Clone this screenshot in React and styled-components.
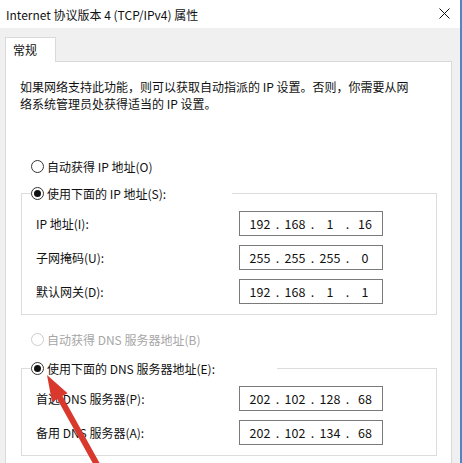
import React from "react"
import styled, { createGlobalStyle } from "styled-components"

const GlobalStyle = createGlobalStyle`
  html, body {
    margin: 0;
    padding: 0;
    background: #f0f0f0;
    overflow: hidden;
  }
  * {
    box-sizing: border-box;
  }
`

const font = `"Segoe UI", "Noto Sans CJK SC", "Noto Sans", sans-serif`

const ipRows = [
  { label: "IP 地址(I):", value: ["192", "168", "1", "16"] },
  { label: "子网掩码(U):", value: ["255", "255", "255", "0"] },
  { label: "默认网关(D):", value: ["192", "168", "1", "1"] },
]

const dnsRows = [
  { label: "首选 DNS 服务器(P):", value: ["202", "102", "128", "68"] },
  { label: "备用 DNS 服务器(A):", value: ["202", "102", "134", "68"] },
]

function IpBox({ parts }) {
  return (
    <IpField>
      {parts.map((p, i) => (
        <React.Fragment key={i}>
          {i > 0 && <Dot>.</Dot>}
          <Octet>{p}</Octet>
        </React.Fragment>
      ))}
    </IpField>
  )
}

function Radio({ checked, disabled, children }) {
  return (
    <RadioLabel $disabled={disabled}>
      <Circle $checked={checked} $disabled={disabled} />
      {children}
    </RadioLabel>
  )
}

export default function App() {
  return (
    <>
      <GlobalStyle />
      <Window>
        <TitleBar>
          <Title>Internet 协议版本 4 (TCP/IPv4) 属性</Title>
          <CloseIcon viewBox="0 0 11 11">
            <path d="M0.5 0.5 L10.5 10.5 M10.5 0.5 L0.5 10.5" stroke="#111" strokeWidth="1" />
          </CloseIcon>
        </TitleBar>
        <Body>
          <Tabs>
            <Tab>常规</Tab>
          </Tabs>
          <Panel>
            <Intro>
              如果网络支持此功能，则可以获取自动指派的 IP 设置。否则，你需要从网
              <br />
              络系统管理员处获得适当的 IP 设置。
            </Intro>
            <LooseRadio $top={46}>
              <Radio>自动获得 IP 地址(O)</Radio>
            </LooseRadio>
            <Group $top={10}>
              <Legend $width={201}>
                <Radio checked>使用下面的 IP 地址(S):</Radio>
              </Legend>
              <Rows>
                {ipRows.map((r) => (
                  <Row key={r.label}>
                    <FieldLabel>{r.label}</FieldLabel>
                    <IpBox parts={r.value} />
                  </Row>
                ))}
              </Rows>
            </Group>
            <LooseRadio $top={16}>
              <Radio disabled>自动获得 DNS 服务器地址(B)</Radio>
            </LooseRadio>
            <Group $top={12}>
              <Legend $width={246}>
                <Radio checked>使用下面的 DNS 服务器地址(E):</Radio>
              </Legend>
              <Rows>
                {dnsRows.map((r) => (
                  <Row key={r.label}>
                    <FieldLabel>{r.label}</FieldLabel>
                    <IpBox parts={r.value} />
                  </Row>
                ))}
              </Rows>
            </Group>
          </Panel>
        </Body>
        <Arrow viewBox="0 0 462 463">
          <polygon
            points="47,375 67.6,393.2 62.4,396.1 102.6,468.5 97.4,471.5 57.2,399.1 52,402"
            fill="#d8392c"
          />
        </Arrow>
      </Window>
    </>
  )
}

const Window = styled.div`
  position: relative;
  width: 462px;
  height: 463px;
  overflow: hidden;
  background: #f0f0f0;
  border-right: 2px solid #4f86c2;
  font-family: ${font};
  font-size: 12px;
  color: #111;
`

const TitleBar = styled.div`
  height: 28px;
  background: #ffffff;
  display: flex;
  align-items: center;
  justify-content: space-between;
  padding: 0 10px 0 6px;
`

const Title = styled.div`
  font-size: 12px;
  line-height: 17px;
`

const CloseIcon = styled.svg`
  width: 11px;
  height: 11px;
  margin-top: -1px;
`

const Body = styled.div`
  padding: 9px 8px 0 5px;
`

const Tabs = styled.div`
  display: flex;
`

const Tab = styled.div`
  width: 51px;
  height: 25px;
  margin-bottom: -1px;
  padding: 3px 0 0 7px;
  background: #ffffff;
  border: 1px solid #d9d9d9;
  border-bottom: none;
  position: relative;
  z-index: 1;
  line-height: 17px;
`

const Panel = styled.div`
  background: #ffffff;
  border: 1px solid #d9d9d9;
  height: 420px;
  padding: 16px 0 0 14px;
`

const Intro = styled.p`
  margin: 0;
  line-height: 17px;
  white-space: nowrap;
`

const LooseRadio = styled.div`
  margin: ${(p) => p.$top}px 0 0 11px;
`

const RadioLabel = styled.div`
  display: flex;
  align-items: center;
  gap: 3px;
  line-height: 17px;
  color: ${(p) => (p.$disabled ? "#a6a6a6" : "#111")};
  white-space: nowrap;
`

const Circle = styled.span`
  width: 13px;
  height: 13px;
  border-radius: 50%;
  border: 1px solid ${(p) => (p.$disabled ? "#cccccc" : "#333333")};
  background: #ffffff;
  display: flex;
  align-items: center;
  justify-content: center;
  flex-shrink: 0;

  &::after {
    content: "";
    width: 7px;
    height: 7px;
    border-radius: 50%;
    background: #111;
    display: ${(p) => (p.$checked ? "block" : "none")};
  }
`

const Group = styled.fieldset`
  margin: ${(p) => p.$top}px 0 0 1px;
  width: 416px;
  border: 1px solid #dcdcdc;
  padding: 0 0 10px 9px;
`

const Legend = styled.legend`
  padding: 0;
  width: ${(p) => p.$width}px;
  background: #ffffff;
`

const Rows = styled.div`
  display: flex;
  flex-direction: column;
  gap: 9px;
  margin-top: 9px;
`

const Row = styled.div`
  display: grid;
  grid-template-columns: 203px 144px;
  align-items: center;
  padding-left: 5px;
`

const FieldLabel = styled.span`
  line-height: 17px;
  white-space: nowrap;
`

const IpField = styled.div`
  height: 25px;
  border: 1px solid #7a7a7a;
  display: flex;
  align-items: center;
  padding-left: 6px;
  font-size: 12.5px;
`

const Octet = styled.span`
  width: 28px;
  text-align: center;
`

const Dot = styled.span`
  width: 7px;
  text-align: center;
`

const Arrow = styled.svg`
  position: absolute;
  left: 0;
  top: 0;
  width: 462px;
  height: 463px;
  pointer-events: none;
`
